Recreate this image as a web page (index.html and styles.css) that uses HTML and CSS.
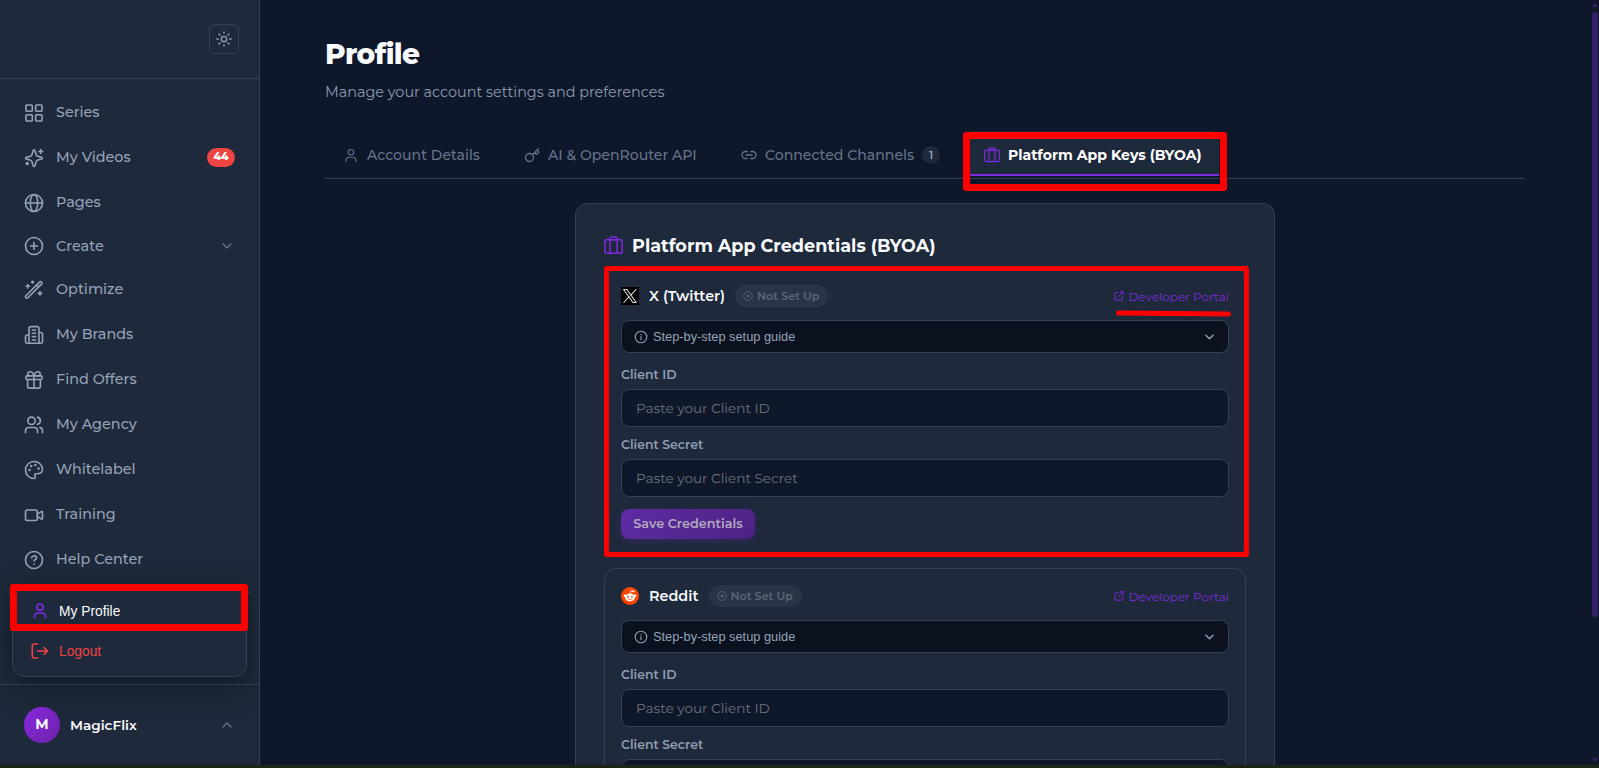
FILE: index.html
```html
<!DOCTYPE html>
<html lang="en">
<head>
<meta charset="utf-8">
<title>Profile</title>
<link rel="stylesheet" href="styles.css">
</head>
<body>
<svg class="defs" width="0" height="0">
  <symbol id="case" viewBox="0 0 18 18"><rect x=".8" y="3.600" width="16.400" height="12.800" rx="1.800"/><path d="M5.600 16.400V2.600Q5.600 1 7.200 1h3.600q1.600 0 1.600 1.600v13.800M5.600 3.600h6.800"/></symbol>
  <symbol id="user" viewBox="0 0 14 16"><circle cx="7" cy="4.200" r="3.200"/><path d="M1.500 15v-2a3 3 0 0 1 3-3h5a3 3 0 0 1 3 3v2"/></symbol>
  <symbol id="down" viewBox="0 0 10 6"><path d="M1 1l4 4 4-4"/></symbol>
  <symbol id="ext" viewBox="0 0 10 10"><path d="M4.300 1.700H1.800a1 1 0 0 0-1 1v5.500a1 1 0 0 0 1 1h5.500a1 1 0 0 0 1-1V5.700M6.200.8h3v3M9.200.8L4.200 5.800"/></symbol>
  <symbol id="info" viewBox="0 0 14 14"><circle cx="7" cy="7" r="5.800"/><path d="M7 6.500v3.200M7 4.200v.5"/></symbol>
  <symbol id="dot" viewBox="0 0 10 10"><circle cx="5" cy="5" r="4.300"/><circle cx="5" cy="5" r="1" fill="currentColor"/></symbol>
</svg>

<div class="app">
  <aside class="sidebar">
    <header class="side-head">
      <button class="theme"><svg width="16" height="16" viewBox="0 0 16 16"><circle cx="8" cy="8" r="2.700"/><path d="M8 .8v1.500M8 13.700v1.500M.8 8h1.500M13.700 8h1.500M2.900 2.900l1.100 1.100M12 12l1.100 1.100M2.900 13.100L4 12M12 4l1.100-1.100"/></svg></button>
    </header>
    <nav class="nav">
      <a class="item"><svg viewBox="0 0 20 20"><rect x="2" y="2" width="6.300" height="6.300" rx=".8"/><rect x="11.700" y="2" width="6.300" height="6.300" rx=".8"/><rect x="2" y="11.700" width="6.300" height="6.300" rx=".8"/><rect x="11.700" y="11.700" width="6.300" height="6.300" rx=".8"/></svg><span>Series</span></a>
      <a class="item"><svg viewBox="0 0 20 20"><path d="M10 1.800q.8 0 1 1l1 3.600q.4 1.600 2 2l3.500.9q1 .3 1 .9t-1 .9l-3.500.9q-1.600.4-2 2l-1 3.500q-.3 1-1 1t-1-1l-.9-3.500q-.4-1.600-2-2l-3.600-.9q-1-.3-1-.9t1-.9l3.600-.9q1.600-.4 2-2L9 2.800q.3-1 1-1z"/><path d="M16.700 1.500v4M14.700 3.500h4"/><circle cx="3.200" cy="15.500" r=".9"/></svg><span>My Videos</span><b class="count">44</b></a>
      <a class="item"><svg viewBox="0 0 20 20"><circle cx="10" cy="10" r="8.500"/><ellipse cx="10" cy="10" rx="3.700" ry="8.500"/><path d="M1.500 10h17"/></svg><span>Pages</span></a>
      <a class="item create"><svg viewBox="0 0 20 20"><circle cx="10" cy="10" r="8.500"/><path d="M10 6.500v7M6.500 10h7"/></svg><span>Create</span><svg class="chev" viewBox="0 0 10 6"><path d="M1 1l4 4 4-4"/></svg></a>
      <a class="item"><svg viewBox="0 0 20 20"><path d="M1.900 15.700L15.500 2.100q1-.9 2 0t0 2L3.900 17.700q-1 .9-2 0t0-2zM12.600 5l2 2M3.800 4.500v3.400M2.100 6.200h3.400M16 11.700v3.400M14.300 13.400h3.400"/><circle cx="8.600" cy="2.100" r=".8"/></svg><span>Optimize</span></a>
      <a class="item"><svg viewBox="0 0 20 20"><path d="M5 18.300V3.300q0-1.700 1.700-1.700h6.700Q15 1.600 15 3.300v15zM5 10H3.200q-1.700 0-1.700 1.700v5q0 1.600 1.700 1.600H5M15 7.500h1.800q1.700 0 1.700 1.700v7.500q0 1.600-1.700 1.600H15M8.300 5h3.400M8.300 8.300h3.400M8.300 11.600h3.400M8.300 15h3.400"/></svg><span>My Brands</span></a>
      <a class="item"><svg viewBox="0 0 20 20"><rect x="1.900" y="5.900" width="16.200" height="3.600" rx="1"/><path d="M3.600 9.500v6.800q0 1.800 1.800 1.800h9.200q1.800 0 1.800-1.800V9.500M10 5.900v12.200M10 5.900C9.400 3 7.800 1.700 5.900 1.700a2.100 2.100 0 0 0 0 4.200M10 5.900c.6-2.900 2.200-4.200 4.100-4.200a2.100 2.100 0 0 1 0 4.200"/></svg><span>Find Offers</span></a>
      <a class="item"><svg viewBox="0 0 20 20"><circle cx="7.500" cy="5.800" r="3.700"/><path d="M1.500 17.700v-1.900a3.300 3.300 0 0 1 3.300-3.300h5.400a3.300 3.300 0 0 1 3.300 3.300v1.900M13.500 2.100a3.700 3.700 0 0 1 0 7.200M18.500 17.700v-1.900a3.300 3.300 0 0 0-2.500-3.200"/></svg><span>My Agency</span></a>
      <a class="item"><svg viewBox="0 0 20 20"><path d="M10 1.500a8.500 8.500 0 1 0 0 17q1.400 0 1.400-1.400 0-.5-.3-1-.4-.5-.4-1 0-1.400 1.400-1.400h1.700q4.700 0 4.700-4.600C18.500 4.900 14.700 1.500 10 1.500z"/><g fill="currentColor"><circle cx="5.500" cy="10" r=".5"/><circle cx="7.200" cy="6" r=".5"/><circle cx="11.300" cy="5" r=".5"/><circle cx="14.500" cy="8.500" r=".5"/></g></svg><span>Whitelabel</span></a>
      <a class="item"><svg viewBox="0 0 20 20"><rect x="1.500" y="5" width="11.800" height="10.500" rx="1.700"/><path d="M13.300 9.200l3.900-2.600q1.300-.7 1.300.6v6.100q0 1.300-1.300.6l-3.900-2.600"/></svg><span>Training</span></a>
      <a class="item"><svg viewBox="0 0 20 20"><circle cx="10" cy="10" r="8.500"/><path d="M7.600 7.700q.5-2 2.500-2 2.400.1 2.400 2.200 0 1.500-2.400 2.400v.8M10.100 14v.3"/></svg><span>Help Center</span></a>
    </nav>
    <footer class="side-foot">
      <span class="avatar">M</span><span class="name">MagicFlix</span>
      <svg class="chev" viewBox="0 0 10 6"><path d="M1 5l4-4 4 4"/></svg>
    </footer>
    <div class="popup">
      <a class="pop-item"><svg class="violet" width="14" height="16"><use href="#user"/></svg><span>My Profile</span></a>
      <a class="pop-item logout"><svg width="18" height="16" viewBox="0 0 18 16"><path d="M6.500 1H3.300Q1.300 1 1.300 3v10q0 2 2 2h3.200M6.500 8h10M13 4.500L16.500 8 13 11.500"/></svg><span>Logout</span></a>
    </div>
  </aside>

  <main class="main">
    <h1>Profile</h1>
    <p class="sub">Manage your account settings and preferences</p>
    <div class="tabs">
      <a class="tab t1"><svg width="12" height="15"><use href="#user"/></svg><span>Account Details</span></a>
      <a class="tab t2"><svg width="16" height="16" viewBox="0 0 16 16"><circle cx="5.500" cy="10.500" r="4"/><path d="M8.400 7.600l6-6M10.600 5.400l1.600 2 2.700-2.200-1.800-2.300"/></svg><span>AI &amp; OpenRouter API</span></a>
      <a class="tab t3"><svg width="16" height="10" viewBox="0 0 16 10"><path d="M6.200 1.500H4.500a3.400 3.400 0 0 0 0 7h1.700M9.800 1.500h1.700a3.400 3.400 0 0 1 0 7H9.800M5 5h6"/></svg><span>Connected Channels</span><b>1</b></a>
      <a class="tab t4"><svg class="violet" width="16" height="16"><use href="#case"/></svg><span>Platform App Keys (BYOA)</span></a>
    </div>
    <section class="panel">
      <h2><svg class="violet" width="19" height="19"><use href="#case"/></svg><span>Platform App Credentials (BYOA)</span></h2>

      <article class="cred">
        <div class="cred-head">
          <svg class="logo" width="18" height="18" viewBox="0 0 18 18"><path fill="#000" stroke="none" d="M0 0h18v18H0z"/><path fill="none" stroke="#ddd" stroke-width="1.100" d="M2.600 2.500h3.300l9.300 13h-3.300zM15 2.500l-5.300 5.800M2.800 15.500l5.400-6"/></svg>
          <h3>X (Twitter)</h3>
          <span class="status"><svg width="10" height="10"><use href="#dot"/></svg><span>Not Set Up</span></span>
          <a class="portal"><svg width="10" height="10"><use href="#ext"/></svg><span>Developer Portal</span></a>
        </div>
        <div class="guide"><svg width="14" height="14"><use href="#info"/></svg><span>Step-by-step setup guide</span><svg class="g-chev" width="9" height="6"><use href="#down"/></svg></div>
        <label>Client ID</label>
        <div class="input"><span>Paste your Client ID</span></div>
        <label class="secret">Client Secret</label>
        <div class="input"><span>Paste your Client Secret</span></div>
        <button class="save">Save Credentials</button>
      </article>

      <article class="cred">
        <div class="cred-head">
          <svg class="logo" width="18" height="18" viewBox="0 0 18 18"><circle cx="9" cy="9" r="9" fill="#ff4500" stroke="none"/><path d="M9 6.500l.8-2.800 2.400.5" stroke="#fff" stroke-width=".8"/><g fill="#fff" stroke="none"><circle cx="12.500" cy="4.300" r="1"/><circle cx="4" cy="8.700" r="1.300"/><circle cx="14" cy="8.700" r="1.300"/><ellipse cx="9" cy="10.400" rx="5" ry="3.900"/></g><g fill="#ff4500" stroke="none"><circle cx="7" cy="9.700" r=".9"/><circle cx="11" cy="9.700" r=".9"/></g><path d="M7 12q2 1.200 4 0" stroke="#ff4500" stroke-width=".7"/></svg>
          <h3>Reddit</h3>
          <span class="status"><svg width="10" height="10"><use href="#dot"/></svg><span>Not Set Up</span></span>
          <a class="portal"><svg width="10" height="10"><use href="#ext"/></svg><span>Developer Portal</span></a>
        </div>
        <div class="guide"><svg width="14" height="14"><use href="#info"/></svg><span>Step-by-step setup guide</span><svg class="g-chev" width="9" height="6"><use href="#down"/></svg></div>
        <label>Client ID</label>
        <div class="input"><span>Paste your Client ID</span></div>
        <label class="secret">Client Secret</label>
        <div class="input"></div>
      </article>
    </section>
  </main>
  <div class="scroll"><i class="up"></i><i class="thumb"></i><i class="dn"></i></div>
</div>
<div class="taskbar"></div>
<div class="mark m-tab"></div>
<div class="mark m-card"></div>
<div class="mark m-profile"></div>
<div class="m-line"></div>
</body>
</html>
```
FILE: styles.css
```css
* { box-sizing: border-box; }
body { margin: 0; width: 1599px; height: 768px; overflow: hidden; position: relative; background: #0f172a; color: #f8fafc; font-family: Montserrat, Inter, sans-serif; font-size: 14px; }
svg { fill: none; stroke: currentColor; stroke-width: 1.6; stroke-linecap: round; stroke-linejoin: round; flex: none; display: block; }
.defs { position: absolute; }
h1, h2, h3, p { margin: 0; }
button { font: inherit; padding: 0; }
span, label, h1, p, h3 { white-space: nowrap; }
.violet { color: #7e2be0; }
.app { display: flex; height: 765px; overflow: hidden; }
.taskbar { height: 3px; background: #1d2519; }

.sidebar { position: relative; width: 260px; height: 765px; flex: none; overflow: hidden; background: #1e293b; border-right: 1px solid #334155; display: flex; flex-direction: column; }
.side-head { height: 79px; border-bottom: 1px solid #334155; display: flex; justify-content: flex-end; padding: 24px 20px 0 0; }
.theme { width: 30px; height: 30px; border: 1px solid #334155; border-radius: 6px; background: none; color: #94a3b8; display: grid; place-items: center; }
.theme svg { stroke-width: 1.3; }
.nav { margin: 11px 8px 0; height: 504px; border-bottom: 1px solid #334155; color: #94a3b8; }
.item { height: 45px; display: flex; align-items: center; padding: 1px 16px 0; gap: 12px; font-size: 14.4px; font-weight: 500; }
.item > svg { width: 20px; height: 20px; }
.item > span { margin-top: -3px; }
.create { height: 42px; padding-top: 0; }
.create > span { margin-top: 0; }
.item > .chev, .chev { width: 10px; height: 6px; margin-left: auto; margin-right: 3px; color: #64748b; stroke-width: 1.3; }
.side-foot .chev { margin-right: 4px; }
.count { margin: -2px 0 0 auto; width: 28px; height: 19px; border-radius: 10px; background: #ef4444; color: #fff; font-size: 10.800px; line-height: 18px; text-align: center; font-weight: 800; }
.side-foot { margin-top: 90px; height: 81px; border-top: 1px solid #334155; display: flex; align-items: center; padding: 0 23px 0 24px; }
.avatar { width: 36px; height: 36px; border-radius: 50%; background: linear-gradient(135deg, #8a2be2, #6b21a8); font-weight: 700; text-align: center; line-height: 35px; }
.name { margin-left: 10px; font-size: 13.6px; font-weight: 600; }
.popup { position: absolute; left: 12px; top: 586px; width: 235px; height: 91px; background: #1e293b; border: 1px solid #334155; border-radius: 12px; box-shadow: 0 8px 32px rgba(0,0,0,.4); font: 13.8px "Liberation Sans", sans-serif; }
.pop-item { height: 40px; display: flex; align-items: center; padding-left: 20px; gap: 12px; margin-top: 4px; }
.logout { color: #ef4444; margin-top: 0; padding-left: 18px; gap: 10px; }

.main { width: 1332px; padding: 0 0 0 65px; }
h1 { height: 46px; margin-top: 31px; font-size: 28px; line-height: 46px; font-weight: 800; letter-spacing: -.56px; }
.sub { margin-top: 3px; height: 24px; line-height: 25px; font-size: 14.4px; color: #8b9ab1; }
.tabs { margin-top: 27px; width: 1200px; height: 48px; border-bottom: 1px solid #334155; display: flex; color: #64748b; font-weight: 500; font-size: 14.08px; }
.tab { height: 45px; display: flex; align-items: center; padding-top: 3px; }
.tab svg { stroke-width: 1.3; }
.t1 { padding-left: 20px; width: 199px; gap: 10px; }
.t2 { width: 217px; gap: 8px; }
.t3 { width: 223px; gap: 8px; }
.tab b { width: 18px; height: 18px; border-radius: 9px; background: #1e293b; color: #94a3b8; font-size: 11px; line-height: 18px; text-align: center; font-weight: 600; }
.t4 { margin-left: 2px; width: 253px; padding-left: 18px; gap: 8px; background: #1e293b; color: #fff; font-weight: 700; border-bottom: 2px solid #7e2be0; border-radius: 8px 8px 0 0; }
.tab.t4 { padding-top: 5px; }

.panel { width: 700px; height: 800px; margin: 24px 0 0 250px; border: 1px solid #334155; border-radius: 12px; background: #1e293b; padding: 28px; }
h2 { height: 36px; display: flex; align-items: flex-start; gap: 9px; font-size: 17.6px; font-weight: 700; }
h2 svg { margin-top: 4px; stroke-width: 1.4; }
h2 span { line-height: 28px; }
.cred { height: 288px; margin-bottom: 12px; border: 1px solid #334155; border-radius: 12px; padding: 16px; }
.cred-head { height: 22px; display: flex; align-items: center; }
h3 { margin-left: 10px; font-size: 14.4px; font-weight: 600; }
.status { margin-left: 10px; width: 93px; height: 22px; border-radius: 11px; background: #293446; color: #5b6578; display: flex; align-items: center; padding-left: 8px; gap: 4px; font-size: 11.2px; font-weight: 600; }
.status svg { stroke-width: .9; }
.portal { margin-left: auto; display: flex; align-items: center; gap: 4px; color: #7a2bdc; font-size: 12px; }
.portal svg { stroke-width: 1; }
.guide { margin-top: 13px; height: 33px; border: 1px solid #334155; border-radius: 8px; background: #0b111e; color: #94a3b8; display: flex; align-items: center; padding: 0 14px 0 12px; gap: 5px; font: 12.8px "Liberation Sans", sans-serif; }
.guide svg { stroke-width: 1.1; }
.guide .g-chev { margin-left: auto; stroke-width: 1.6; }
label { display: block; height: 26px; line-height: 24px; margin-top: 10px; font-size: 12.48px; font-weight: 600; color: #8f9db2; }
.secret { margin-top: 6px; }
.input { height: 38px; border: 1px solid #334155; border-radius: 8px; background: #0f172a; color: #70737a; padding: 0 14px; display: flex; align-items: center; font-size: 13.6px; }
.save { display: block; margin-top: 12px; width: 134px; height: 30px; border: 0; border-radius: 8px; background: linear-gradient(135deg, #5e2ba5, #4c2381); color: #b1aabf; font-size: 12.8px; font-weight: 600; padding-bottom: 1px; box-shadow: 0 3px 9px rgba(110,40,190,.25); }

.scroll { width: 6px; height: 765px; display: flex; flex-direction: column; flex: none; }
.up, .dn { border: 3px solid transparent; }
.up { border-top: 0; border-bottom: 4px solid #34206a; margin-top: 3px; height: 4px; }
.thumb { margin-top: 5px; height: 605px; background: #34206a; border-radius: 3px; }
.dn { margin-top: auto; border-bottom: 0; border-top: 4px solid #34206a; height: 4px; margin-bottom: 3px; }

.mark { position: absolute; border: 7px solid #f00; border-radius: 3px; }
.m-tab { left: 963px; top: 132px; width: 264px; height: 59px; }
.m-card { left: 604px; top: 266px; width: 645px; height: 291px; border-width: 5px; }
.m-profile { left: 10px; top: 584px; width: 238px; height: 47px; }
.m-line { position: absolute; left: 1116px; top: 311px; width: 115px; height: 5px; border-radius: 3px; background: #f00; transform: rotate(.4deg); }
```
